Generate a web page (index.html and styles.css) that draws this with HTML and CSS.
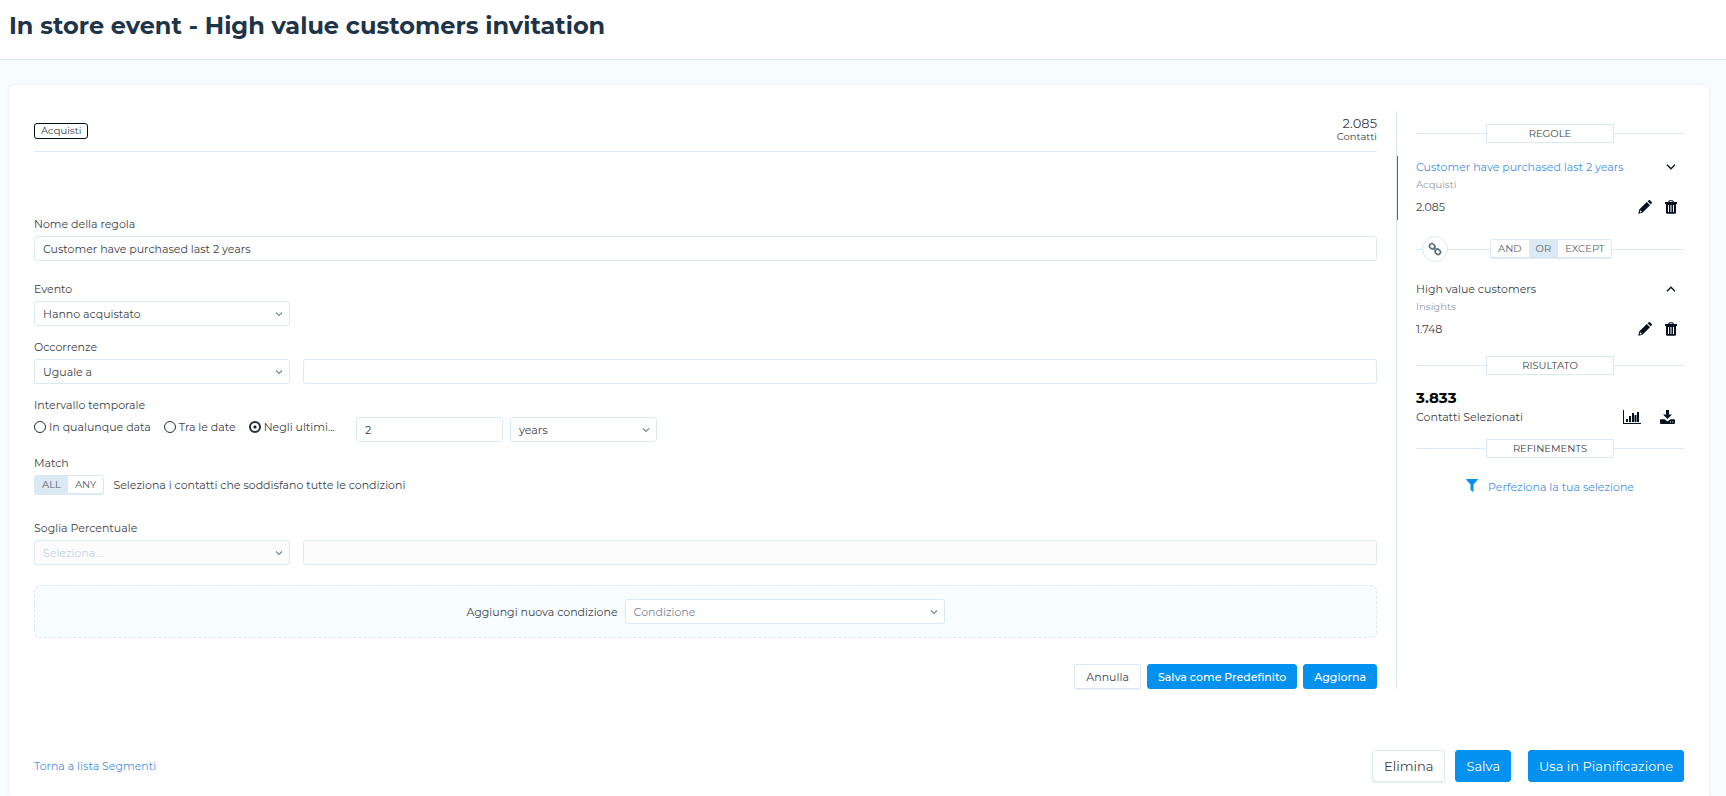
FILE: index.html
```html
<!DOCTYPE html>
<html lang="it">
<head>
<meta charset="utf-8">
<meta name="viewport" content="width=device-width, initial-scale=1">
<title>In store event - High value customers invitation</title>
<link rel="stylesheet" href="styles.css">
</head>
<body>
<svg class="sprite" aria-hidden="true">
  <symbol id="i-caret" viewBox="0 0 8 6"><path d="M1 1.500l3 3 3-3" fill="none" stroke="currentColor" stroke-width="1.200"/></symbol>
  <symbol id="i-pencil" viewBox="0 0 14 14"><path fill="currentColor" fill-rule="evenodd" d="M8.800 2L12 5.200 4.400 12.800 0.300 13.700 1.200 9.600zM9.600 1.200L10.700.3q.7-.5 1.300 0l1.700 1.700q.5.700 0 1.300L12.800 4.400zM2.100 10.500l-.4 1.200.7.7 1.300-.4v-.8H2.900v-.8z"/></symbol>
  <symbol id="i-trash" viewBox="0 0 12 14"><path fill="currentColor" fill-rule="evenodd" d="M0 2h3L3.800.7Q4 .3 4.500.3h3q.5 0 .7.4L9 2h3v2h-1V12.500q0 1.200-1.200 1.200H2.200Q1 13.700 1 12.500V4H0zM4.300 2h3.400L7.200 1.300H4.800zM3 5v7h1V5zM5.500 5v7h1V5zM8 5v7h1V5z"/></symbol>
  <symbol id="i-link" viewBox="0 0 14 14"><g fill="none" stroke="currentColor" stroke-width="1.700"><rect x="1.400" y="2" width="5.600" height="4.600" rx="2.200" transform="rotate(45 4.200 4.300)"/><rect x="7" y="7.500" width="5.600" height="4.600" rx="2.200" transform="rotate(45 9.800 9.800)"/><path d="M5.500 5.500l3 3"/></g></symbol>
  <symbol id="i-chart" viewBox="0 0 18 14"><path fill="currentColor" d="M0 0h1v13h17v1H0zM3 9h2v3H3zM6 6h2v6H6zM9 3h2v9H9zM11.500 5h2v7h-2zM14 2h2v10h-2z"/></symbol>
  <symbol id="i-download" viewBox="0 0 15 14"><path fill="currentColor" fill-rule="evenodd" d="M6 0h3v4.500h3L7.500 9 3 4.500h3zM.8 9.300h3.800L7.500 11.500l2.900-2.200h3.800q.8 0 .8.800v3q0 .8-.8.800H.8q-.8 0-.8-.8v-3q0-.8.8-.8zM10 11.600v1h1v-1zM12.300 11.600v1h1v-1z"/></symbol>
  <symbol id="i-filter" viewBox="0 0 12 13"><path fill="currentColor" d="M.3 0h11.400q.5.300.1.800L7.500 5.400v7q-.2.700-.8.400L4.700 11q-.2-.2-.2-.5V5.400L.2.800Q-.1.300.3 0z"/></symbol>
  <symbol id="i-down" viewBox="0 0 10 6"><path d="M1 .8l4 4 4-4" fill="none" stroke="currentColor" stroke-width="1.300"/></symbol>
  <symbol id="i-up" viewBox="0 0 10 6"><path d="M1 5.200l4-4 4 4" fill="none" stroke="currentColor" stroke-width="1.300"/></symbol>
</svg>

<header class="page-header">
  <h1 class="page-title">In store event - High value customers invitation</h1>
</header>

<main class="card">
  <div class="columns">
    <section class="editor">
      <div class="editor-head">
        <span class="badge">Acquisti</span>
        <div class="count"><span class="count-value">2.085</span><span class="count-label">Contatti</span></div>
      </div>

      <form class="form">
        <div class="field field-name">
          <label class="label" for="nome">Nome della regola</label>
          <input class="control" id="nome" type="text" value="Customer have purchased last 2 years">
        </div>

        <div class="field">
          <label class="label" for="evento">Evento</label>
          <span class="select select-column">
            <select class="control" id="evento"><option>Hanno acquistato</option></select>
            <svg class="caret"><use href="#i-caret"/></svg>
          </span>
        </div>

        <div class="field">
          <label class="label" for="occorrenze">Occorrenze</label>
          <div class="row">
            <span class="select select-column">
              <select class="control" id="occorrenze"><option>Uguale a</option></select>
              <svg class="caret"><use href="#i-caret"/></svg>
            </span>
            <input class="control grow" type="text" aria-label="Numero occorrenze">
          </div>
        </div>

        <div class="field" role="group" aria-labelledby="intervallo">
          <span class="label" id="intervallo">Intervallo temporale</span>
          <div class="interval">
            <div class="radios">
              <label class="radio"><input type="radio" name="range">In qualunque data</label>
              <label class="radio"><input type="radio" name="range">Tra le date</label>
              <label class="radio"><input type="radio" name="range" checked>Negli ultimi...</label>
            </div>
            <input class="control short" type="text" value="2" aria-label="Quantità">
            <span class="select short">
              <select class="control" aria-label="Unità"><option>years</option></select>
              <svg class="caret"><use href="#i-caret"/></svg>
            </span>
          </div>
        </div>

        <div class="field field-match">
          <span class="label">Match</span>
          <div class="match">
            <div class="toggle">
              <button class="toggle-item selected" type="button">ALL</button>
              <button class="toggle-item" type="button">ANY</button>
            </div>
            <span>Seleziona i contatti che soddisfano tutte le condizioni</span>
          </div>
        </div>

        <div class="field">
          <label class="label" for="soglia">Soglia Percentuale</label>
          <div class="row">
            <span class="select select-column">
              <select class="control" id="soglia" disabled><option>Seleziona...</option></select>
              <svg class="caret"><use href="#i-caret"/></svg>
            </span>
            <input class="control grow" type="text" disabled aria-label="Valore soglia">
          </div>
        </div>

        <div class="add-condition">
          <label for="condizione">Aggiungi nuova condizione</label>
          <span class="select select-condition">
            <select class="control muted" id="condizione"><option>Condizione</option></select>
            <svg class="caret"><use href="#i-caret"/></svg>
          </span>
        </div>

        <div class="form-actions">
          <button class="btn" type="button">Annulla</button>
          <button class="btn primary" type="button">Salva come Predefinito</button>
          <button class="btn primary" type="button">Aggiorna</button>
        </div>
      </form>
    </section>

    <aside class="summary">
      <h2 class="divider"><span class="divider-text">REGOLE</span></h2>

      <div class="rule active">
        <div class="rule-line">
          <a class="rule-name" href="#">Customer have purchased last 2 years</a>
          <button class="icon-btn chevron" type="button" aria-label="Sposta giù"><svg width="10" height="6"><use href="#i-down"/></svg></button>
        </div>
        <div class="rule-type">Acquisti</div>
        <div class="rule-line">
          <span>2.085</span>
          <span class="rule-tools">
            <button class="icon-btn" type="button" aria-label="Modifica"><svg width="14" height="14"><use href="#i-pencil"/></svg></button>
            <button class="icon-btn" type="button" aria-label="Elimina regola"><svg width="12" height="14"><use href="#i-trash"/></svg></button>
          </span>
        </div>
      </div>

      <div class="operator">
        <button class="link-btn" type="button" aria-label="Collega"><svg width="14" height="14"><use href="#i-link"/></svg></button>
        <div class="toggle">
          <button class="toggle-item" type="button">AND</button>
          <button class="toggle-item selected" type="button">OR</button>
          <button class="toggle-item" type="button">EXCEPT</button>
        </div>
      </div>

      <div class="rule">
        <div class="rule-line">
          <span>High value customers</span>
          <button class="icon-btn chevron" type="button" aria-label="Sposta su"><svg width="10" height="6"><use href="#i-up"/></svg></button>
        </div>
        <div class="rule-type">Insights</div>
        <div class="rule-line">
          <span>1.748</span>
          <span class="rule-tools">
            <button class="icon-btn" type="button" aria-label="Modifica"><svg width="14" height="14"><use href="#i-pencil"/></svg></button>
            <button class="icon-btn" type="button" aria-label="Elimina regola"><svg width="12" height="14"><use href="#i-trash"/></svg></button>
          </span>
        </div>
      </div>

      <h2 class="divider"><span class="divider-text">RISULTATO</span></h2>

      <div class="result">
        <strong class="result-value">3.833</strong>
        <div class="result-line">
          <span>Contatti Selezionati</span>
          <span class="result-tools">
            <button class="icon-btn" type="button" aria-label="Statistiche"><svg width="18" height="14"><use href="#i-chart"/></svg></button>
            <button class="icon-btn" type="button" aria-label="Scarica"><svg width="15" height="14"><use href="#i-download"/></svg></button>
          </span>
        </div>
      </div>

      <h2 class="divider"><span class="divider-text">REFINEMENTS</span></h2>

      <a class="refine" href="#"><svg width="12" height="13"><use href="#i-filter"/></svg>Perfeziona la tua selezione</a>
    </aside>
  </div>

  <footer class="card-footer">
    <a href="#">Torna a lista Segmenti</a>
    <div class="footer-actions">
      <button class="btn large" type="button">Elimina</button>
      <button class="btn large primary" type="button">Salva</button>
      <button class="btn large primary plan" type="button">Usa in Pianificazione</button>
    </div>
  </footer>
</main>
</body>
</html>
```
FILE: styles.css
```css
:root {
  --line: #dbe9f4;
  --blue: #0591ef;
  --link: #4a90e2;
  --ink: #3d4247;
  --dark: #03111c;
}

* { box-sizing: border-box; }

body {
  margin: 0;
  min-height: 100vh;
  display: flex;
  flex-direction: column;
  background: #f7fcff;
  color: var(--ink);
  font: 11px/16px Montserrat, Inter, "Open Sans", sans-serif;
}

button, input, select { font: inherit; color: inherit; }
button { cursor: pointer; }
a { color: var(--link); text-decoration: none; }
svg { display: block; }
.sprite { position: absolute; width: 0; height: 0; }

.page-header {
  padding: 10px 9px 17px;
  background: #fff;
  border-bottom: 1px solid var(--line);
}
.page-title {
  margin: 0;
  color: #1e3448;
  font-size: 24px;
  line-height: 32px;
  font-weight: 700;
}

.card {
  flex: 1;
  margin: 25px 17px 0 9px;
  padding: 26px 25px 14px 25px;
  background: #fff;
  border-radius: 6px 6px 0 0;
  box-shadow: 0 0 3px rgba(30, 80, 120, .12);
}
.columns { display: flex; gap: 19px; }
.editor { flex: 1; min-width: 0; }

.editor-head {
  display: flex;
  justify-content: space-between;
  align-items: center;
  padding: 5px 0 8px;
  border-bottom: 1px solid var(--line);
}
.badge {
  margin-top: 2px;
  padding: 0 6px;
  border: 1px solid var(--dark);
  border-radius: 3px;
  font-size: 10px;
  line-height: 14px;
}
.count { display: flex; flex-direction: column; text-align: right; }
.count-value { font-size: 13px; line-height: 15px; }
.count-label { font-size: 10px; line-height: 12px; }

.form { padding-top: 64px; }
.field { display: flex; flex-direction: column; gap: 4px; margin-bottom: 13px; }
.field-name { margin-bottom: 20px; }
.field-match { margin-bottom: 25px; }

.control {
  width: 100%;
  height: 25px;
  padding: 0 8px;
  border: 1px solid var(--line);
  border-radius: 3px;
  background: #fff;
  appearance: none;
}
.control:disabled { background: #fcfcfc; color: #c3d3df; opacity: 1; }
.muted { color: #7d858c; }
.select { position: relative; display: block; }
.caret {
  position: absolute;
  right: 7px;
  top: 10px;
  width: 8px;
  height: 6px;
  color: #7b8995;
  pointer-events: none;
}
.select-column { flex: none; width: 256px; }
.row { display: flex; gap: 13px; }
.grow { flex: 1; width: auto; min-width: 0; }

.interval { display: flex; gap: 7px; }
.radios { display: flex; gap: 13px; width: 315px; padding-top: 2px; align-self: flex-start; white-space: nowrap; }
.radio { display: flex; align-items: center; gap: 3px; }
.radio input {
  appearance: none;
  width: 12px;
  height: 12px;
  margin: 0;
  border: 1px solid #222d36;
  border-radius: 50%;
}
.radio input:checked { border-width: 2px; background: radial-gradient(circle, #111c25 1px, #fff 2px); }
.short { width: 147px; }

.match { display: flex; align-items: center; gap: 9px; }
.toggle {
  display: flex;
  height: 20px;
  border: 1px solid var(--line);
  border-bottom-width: 2px;
  border-radius: 3px;
  background: #fff;
}
.toggle-item {
  padding: 0 7px;
  border: 0;
  background: none;
  color: #5b646c;
  font-size: 10px;
  line-height: 17px;
}
.selected { background: var(--line); }

.add-condition {
  display: flex;
  justify-content: center;
  align-items: center;
  gap: 7px;
  margin-top: 20px;
  padding: 13px;
  border: 1px dashed var(--line);
  border-radius: 6px;
  background: #f7fcff;
}
.select-condition { width: 320px; }

.form-actions { display: flex; justify-content: flex-end; gap: 6px; margin-top: 26px; }
.btn {
  height: 25px;
  padding: 0 11px;
  border: 1px solid var(--line);
  border-radius: 3px;
  background: #fff;
  box-shadow: 0 1px 1px rgba(30, 80, 120, .1);
  white-space: nowrap;
}
.btn.primary { padding: 0 10px; border-color: var(--blue); background: var(--blue); color: #fff; font-weight: 500; box-shadow: none; }
.btn.large { height: 32px; padding: 0 11px; font-size: 13px; }
.btn.large.primary { padding: 0 10px; font-weight: 400; }

.summary {
  flex: 0 0 288px;
  padding-top: 13px;
  border-left: 1px solid var(--line);
}
.divider {
  display: flex;
  align-items: center;
  margin: 0 0 0 19px;
  font-size: 10px;
  font-weight: 400;
}
.divider::before, .divider::after { content: ""; flex: 1; border-top: 1px solid var(--line); }
.divider-text {
  width: 128px;
  border: 1px solid var(--line);
  line-height: 17px;
  text-align: center;
}

.rule { padding: 3px 7px 5px 19px; margin-bottom: 14px; }
.rule.active { margin: 13px 0 15px; border-left: 1px solid #0a7fd0; padding-left: 18px; }
.rule-line { display: flex; justify-content: space-between; align-items: center; height: 16px; }
.rule-type { margin: 2px 0 6px; color: #929ba3; font-size: 10px; }
.rule-tools { display: flex; gap: 13px; }
.icon-btn { padding: 0; border: 0; background: none; color: var(--dark); }
.chevron { margin-right: 1px; }

.operator {
  display: flex;
  align-items: center;
  height: 28px;
  margin: 0 0 15px 19px;
  padding-left: 6px;
  background: linear-gradient(var(--line), var(--line)) center / 100% 1px no-repeat;
}
.link-btn {
  display: grid;
  place-items: center;
  width: 26px;
  height: 26px;
  padding: 0;
  border: 1px solid var(--line);
  border-radius: 50%;
  background: #fff;
  color: #5d7080;
}
.operator .toggle { margin: 0 auto 0 42px; }

.result { margin: 14px 9px 14px 19px; }
.result-value { display: block; color: #000; font-size: 15px; font-weight: 700; line-height: 18px; }
.result-line { display: flex; justify-content: space-between; align-items: center; margin-top: 2px; }
.result-tools { display: flex; gap: 19px; }

.refine {
  display: flex;
  justify-content: center;
  gap: 10px;
  margin: 21px 0 0 19px;
}
.refine svg { color: var(--blue); }

.card-footer { display: flex; justify-content: space-between; align-items: center; margin-top: 61px; }
.footer-actions { display: flex; gap: 10px; }
.plan { margin-left: 7px; }
```
